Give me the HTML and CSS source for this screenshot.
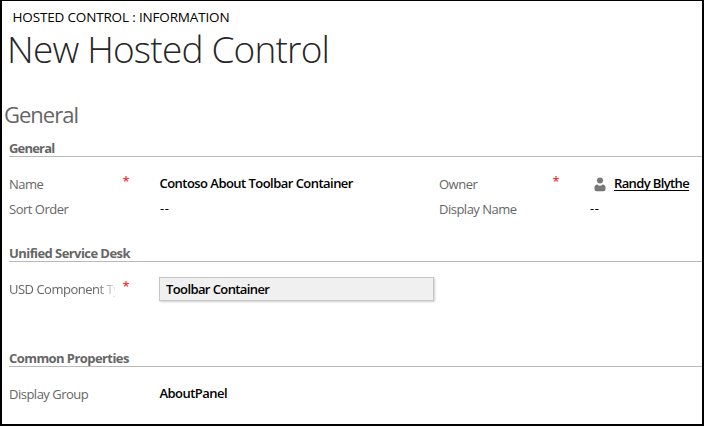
FILE: index.html
```html
<!DOCTYPE html>
<html lang="en">
<head>
<meta charset="utf-8">
<title>New Hosted Control</title>
<link rel="stylesheet" href="styles.css">
</head>
<body>
<main class="form">
  <header class="header">
    <div class="crumb">HOSTED CONTROL : INFORMATION</div>
    <h1 class="title">New Hosted Control</h1>
  </header>
  <h2 class="tab">General</h2>
  <section class="section section-general">
    <h3 class="heading heading-tight">General</h3>
    <div class="row">
      <span class="label">Name</span><span class="req">*</span>
      <span class="value">Contoso About Toolbar Container</span>
      <span class="label">Owner</span><span class="req">*</span>
      <span class="value owner"><svg class="person" viewBox="0 0 12 15"><circle cx="6" cy="3.5" r="3"/><path d="M.5 12.6V10.6Q.5 7.8 3.4 7.5Q6 10 8.6 7.5Q11.5 7.8 11.5 10.6V12.6Q11.5 14.3 9.5 14.3H2.5Q.5 14.3.5 12.6Z"/></svg><a class="link">Randy Blythe</a></span>
    </div>
    <div class="row">
      <span class="label">Sort Order</span><span class="req"></span>
      <span class="value dash">--</span>
      <span class="label">Display Name</span><span class="req"></span>
      <span class="value dash">--</span>
    </div>
  </section>
  <section class="section section-desk">
    <h3 class="heading">Unified Service Desk</h3>
    <div class="row">
      <span class="label fade">USD Component Ty</span><span class="req">*</span>
      <span class="field">Toolbar Container</span>
    </div>
  </section>
  <section class="section section-common">
    <h3 class="heading">Common Properties</h3>
    <div class="row">
      <span class="label">Display Group</span><span class="req"></span>
      <span class="value">AboutPanel</span>
    </div>
  </section>
</main>
</body>
</html>
```
FILE: styles.css
```css
* { box-sizing: border-box; }
body { margin: 0; background: #fff; }
.form {
  width: 704px;
  height: 426px;
  overflow: hidden;
  border: solid #000;
  border-width: 1px 2px 2px;
  padding-top: 7px;
  font: 13px/18px "Open Sans", "Noto Sans", sans-serif;
  color: #000;
}
h1, h2, h3 { margin: 0; }
.crumb {
  padding-left: 10.5px;
  font-size: 13.5px;
  letter-spacing: -0.16px;
  white-space: nowrap;
}
.title {
  padding: 2px 0 2px 5px;
  font-size: 37px;
  line-height: 42px;
  font-weight: 300;
  letter-spacing: -0.8px;
  color: #262626;
  white-space: nowrap;
}
.tab {
  margin-top: 27px;
  padding-left: 2px;
  font-size: 22px;
  line-height: 30px;
  font-weight: 400;
  letter-spacing: -1px;
  color: #666;
}
.section { padding-left: 7px; }
.section-general { margin-top: 10px; height: 105px; }
.section-desk { height: 105px; }
.heading {
  height: 18px;
  margin-bottom: 18px;
  border-bottom: 1px solid #b9b9b9;
  font-size: 13px;
  line-height: 18px;
  font-weight: 700;
  letter-spacing: -0.57px;
  color: #666;
}
.heading-tight { letter-spacing: -0.8px; }
.row {
  display: grid;
  grid-template-columns: 106px 44px 280px 106px 44px 113px;
  height: 25px;
  white-space: nowrap;
}
.label { color: #666; letter-spacing: -0.5px; }
.fade {
  letter-spacing: -0.5px;
  -webkit-mask-image: linear-gradient(to right, #000 88px, transparent 110px);
  mask-image: linear-gradient(to right, #000 88px, transparent 110px);
}
.req { padding-left: 7.5px; color: #f00; font-size: 13px; line-height: 12px; }
.value { margin-top: -1px; padding-left: 0.5px; font-weight: 600; letter-spacing: -0.54px; }
.dash { padding-left: 1px; font-weight: 400; letter-spacing: 0.5px; }
.owner { display: flex; align-items: flex-start; padding-left: 5px; letter-spacing: -0.62px; }
.person { width: 12px; height: 15px; margin: 3px 8px 0 0; fill: #777; }
.link { text-decoration: underline; text-underline-offset: 2px; text-decoration-thickness: 1px; text-decoration-skip-ink: none; }
.field {
  width: 275px;
  height: 24px;
  margin-top: -3px;
  padding: 2px 0 0 6px;
  border: 1px solid #c6c6c6;
  background: #f0f0f0;
  box-shadow: 1px 1px 2px rgba(0, 0, 0, 0.2);
  font-weight: 600;
  letter-spacing: -0.6px;
}
```
